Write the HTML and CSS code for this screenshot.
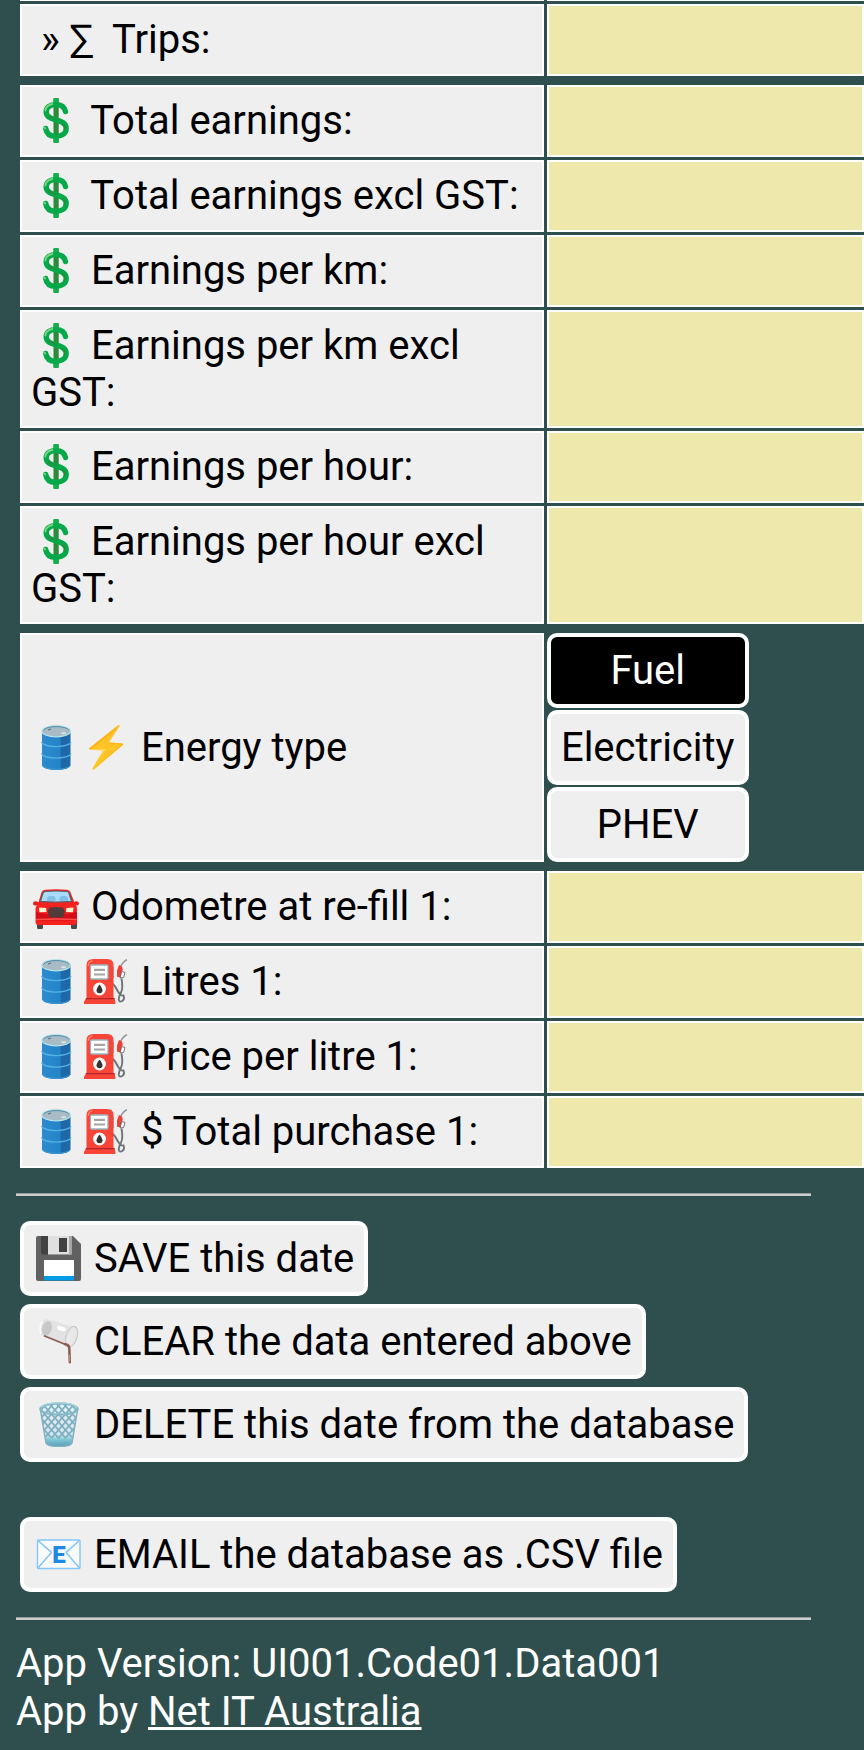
FILE: index.html
```html
<!DOCTYPE html>
<html lang="en">
<head>
  <meta charset="utf-8">
  <meta name="viewport" content="width=device-width, initial-scale=1">
  <title>Driver Log</title>
  <link rel="stylesheet" href="styles.css">
</head>
<body>
  <!-- icons -->
  <svg class="defs" aria-hidden="true">
    <defs>
      <linearGradient id="barrelSide" x1="0" x2="1">
        <stop offset="0" stop-color="#2b8bce"/>
        <stop offset=".64" stop-color="#2484c8"/>
        <stop offset=".67" stop-color="#1d69aa"/>
        <stop offset="1" stop-color="#2167a5"/>
      </linearGradient>
      <linearGradient id="basketFill" x1="0" x2="0" y1="0" y2="1">
        <stop offset="0" stop-color="#b9dce8" stop-opacity=".2"/>
        <stop offset=".68" stop-color="#a8d6e3" stop-opacity=".4"/>
        <stop offset=".8" stop-color="#82c8d8"/>
        <stop offset="1" stop-color="#5a9cb2"/>
      </linearGradient>
      <pattern id="mesh" width="7" height="8" patternUnits="userSpaceOnUse">
        <path d="M0 0l7 8M7 0L0 8" stroke="#7badc0" stroke-width="1.700"/>
      </pattern>
    </defs>
    <symbol id="dollar" viewBox="0 0 50 45">
      <rect x="22.500" y="0" width="5.200" height="45" rx="1.200" fill="#2c8a3b"/>
      <path d="M22.500 1.200q0-1.200 1.200-1.200h2.800q1.200 0 1.200 1.200V7h-5.200zM22.500 39h5.200v4.800q0 1.200-1.200 1.200h-2.800q-1.200 0-1.200-1.200z" fill="#12b04a"/>
      <path d="M34.500 13.500C33.500 8.500 30 6.600 25 6.600c-6 0-9.800 2.700-9.800 7.300 0 5 4.600 6.500 9.800 7.900 5.500 1.500 10.200 3.200 10.200 8.500 0 5-4.200 8-10.200 8-5.800 0-9.500-2.500-10.300-7.800" fill="none" stroke="#06a94a" stroke-width="5.400" stroke-linecap="round"/>
      <path d="M31 25.500c3 1.500 3.500 4 2.500 7M17 17.500c2 2.500 6 3.200 9 4" fill="none" stroke="#2c8a3b" stroke-width="1.400"/>
      <path d="M14.300 12.500c.5-3.500 3-5.800 7-6.500M13 29.500c.6 0 1 .5 1.100 1.200" fill="none" stroke="#7ad681" stroke-width="1.800" stroke-linecap="round"/>
    </symbol>
    <symbol id="barrel" viewBox="0 0 50 45">
      <path d="M11 6v34c0 3 7 5 14.300 5s14.200-2 14.200-5V6z" fill="url(#barrelSide)"/>
      <path d="M10.500 17c1 3 8 4.600 14.700 4.600S39 20 40 17M10.500 28.500c1 3 8 4.600 14.700 4.600S39 31.500 40 28.500" fill="none" stroke="#55b0e2" stroke-width="1.300"/>
      <path d="M11 40c1 2.500 7 4.300 14.300 4.300S38.500 42.500 39.500 40" fill="none" stroke="#3e9cd4" stroke-width="1"/>
      <ellipse cx="25.200" cy="6.200" rx="14.300" ry="5.600" fill="#a9bcc5" stroke="#b4e3e9" stroke-width="1.200"/>
      <path d="M12.500 5.500C14 2.800 19 1.600 25.200 1.600S37 3 38 5.500" fill="none" stroke="#4d87ad" stroke-width="1"/>
      <ellipse cx="32.500" cy="8.300" rx="2.500" ry="1" fill="#dce5e9"/>
      <path d="M17 4.800l3-.7" stroke="#577d99" stroke-width="1.300"/>
    </symbol>
    <symbol id="bolt" viewBox="0 0 50 45">
      <path d="M37.500 0L8 23.500q-.4 1 1 1.100l13 .9-10.600 18q0 1.700 1.200 1.400L42 19.800q.3-1-1-1.200l-13-1L38.600 1q.1-1.300-1.100-1z" fill="#ffc527"/>
      <path d="M37.500 0L8 23.500l1.800.9L34.500 5zM28 17.600l-2.500.2L31 19l9.500.6L18 39l-6.300 5.500L42 19.800q.3-1-1-1.200z" fill="#fdb316"/>
      <path d="M13 24.900l9 .6-9 15L24.500 24z" fill="#ffdc6b"/>
    </symbol>
    <symbol id="car" viewBox="0 0 50 45">
      <path d="M6 38h6v5.500q0 1.500-1.500 1.500h-3Q6 45 6 43.500zM40 38h6v5.500q0 1.500-1.500 1.500h-3Q40 45 40 43.500z" fill="#484848"/>
      <path d="M2 19.500q0-2.500 3-2.300l4 1.500v2.500l-5 .2Q2 21.500 2 19.500zM48 19.500q0-2.500-3-2.300l-4 1.500v2.500l5 .2q2-.1 2-1.900z" fill="#e5211f"/>
      <path d="M14 5.800q11-1 22 0 2.600.2 3.500 2.400L44 20q2 2 2 6v12q0 3-3 3H7.500q-3 0-3-3V26q0-4 2.500-6l3.500-11.800q1-2.200 3.500-2.400z" fill="#f5221f"/>
      <path d="M5 28q20 5 41 0v8.500H5z" fill="#d50d19"/>
      <path d="M5 35.500q20-1 41 0" stroke="#ff5148" stroke-width="1.600" fill="none"/>
      <path d="M14.500 7.500q10.500-1 21.500 0 1.500.2 2 1.500l2.500 8.300q-15.500 1.400-31 0L12 9q.7-1.300 2.500-1.500z" fill="#a9dcfa" stroke="#52656d" stroke-width="1.200"/>
      <path d="M16 17v-2q0-3 3-3h2.500q3 0 3 3v2zM28.500 17v-2q0-3 3-3H34q3 0 3 3v2z" fill="#82bfe7"/>
      <path d="M16.500 28l2-4.500q6.500-1 13.500 0l2 4.500-2.500 5.500H19z" fill="#523b3b"/>
      <path d="M8 23.500l7 .5.500 4-7 .2zM42.500 23.500l-7 .5-.5 4 7 .2z" fill="#fff9d3"/>
    </symbol>
    <symbol id="pump" viewBox="0 0 50 45">
      <path d="M31 24q3.500 3 6 8.500 3 5 5.500 4 1.500 3.500-1.200 5.500-3.300 1.700-3.600-1.500.2-3 2.300-7 2.300-4 .5-14" fill="none" stroke="#6d7477" stroke-width="1.900"/>
      <path d="M46 .8q-3 1-6.500 6.500" fill="none" stroke="#939393" stroke-width="1.500"/>
      <path d="M38 6l3 1.500.8 3.500-1.500 2v5.500l-4.300-.7V11.500z" fill="#ef3e36"/>
      <path d="M40.700 12.500l3.300 1-1.400 5-3.600.5z" fill="#fff" stroke="#555" stroke-width=".8"/>
      <path d="M31 8h2v11h-2z" fill="#99b2bd"/>
      <path d="M5.500 6q0-6 7-6H26q6.500 0 6.500 6v34h-27z" fill="#f94438"/>
      <path d="M7.300 7q0-4.500 4-5.200" stroke="#ff8a60" stroke-width="1.300" fill="none"/>
      <path d="M5 39h28.500l.9 4v2H3v-2z" fill="#f94438"/>
      <path d="M5 39h28.500v1.300H5z" fill="#b7252a"/>
      <rect x="9.500" y="6" width="17.500" height="14" rx="1" fill="#fff" stroke="#99b2bd" stroke-width="1.300"/>
      <path d="M13 10.800h11M13 15.500h11" stroke="#a4a4a4" stroke-width="2.200"/>
      <circle cx="18.500" cy="30" r="6.400" fill="#fff"/>
      <path d="M18.500 25.500q3 4 3 5.700a3 3 0 0 1-6 0q0-1.700 3-5.700z" fill="#333"/>
    </symbol>
    <symbol id="floppy" viewBox="0 0 50 45">
      <path d="M4 0h35l8 8v35q0 2-2 2H4q-2 0-2-2V2q0-2 2-2z" fill="#616161"/>
      <path d="M7 0h30v18.500H9q-2 0-2-2z" fill="#424242"/>
      <path d="M14 0h23.500v18.500H14z" fill="#e0e0e0"/>
      <path d="M35 0h2.500v18.500H35z" fill="#aaa"/>
      <path d="M25 2h8v14h-8z" fill="#424242"/>
      <path d="M10 24h30v16H10z" fill="#fff"/>
      <path d="M10 40h30v4.500H10z" fill="#039be5"/>
    </symbol>
    <symbol id="cup" viewBox="0 0 50 45">
      <path d="M13 .3l26 7.200q5.500 1 4.700 8.500-1.700 10-8.700 12L10 17.500q-5.500-2-4.500-9Q7.500-.3 13 .3z" fill="#e2e2e2"/>
      <ellipse cx="13" cy="9.500" rx="4.700" ry="7.500" transform="rotate(16 13 9.500)" fill="#c8c8c8"/>
      <path d="M8.500 2.500Q4.500 8 7 15" stroke="#fff" stroke-width="1.500" fill="none"/>
      <path d="M10 16.800l21 8.400" stroke="#8d5b50" stroke-width="1.700" fill="none"/>
      <ellipse cx="37.500" cy="17.800" rx="5.400" ry="10.700" transform="rotate(18 37.500 17.800)" fill="#e8e8e8" stroke="#cacaca" stroke-width="1.200"/>
      <path d="M25 8.800l5 1.500" stroke="#fff" stroke-width="4" stroke-linecap="round"/>
      <path d="M31 25.200q4 .5 4.300 4l.5 14" stroke="#8d5b50" stroke-width="2.500" stroke-linecap="round" fill="none"/>
      <path d="M35.500 36l.3 6.500" stroke="#c09a90" stroke-width="1" fill="none"/>
    </symbol>
    <symbol id="basket" viewBox="0 0 50 45">
      <path d="M6.500 8L12 41q1.500 3.500 13 3.500T38 41l5.500-33z" fill="url(#basketFill)"/>
      <path d="M6.500 8l4.300 27q14 3 28.400 0L43.500 8z" fill="url(#mesh)"/>
      <path d="M6.500 8L12 41q1.500 3.500 13 3.500T38 41l5.500-33" fill="none" stroke="#82b1c3" stroke-width="1.500"/>
      <ellipse cx="25" cy="7" rx="18.700" ry="5.700" fill="#e0f2f6"/>
      <ellipse cx="25" cy="7" rx="18.700" ry="5.700" fill="url(#mesh)" stroke="#84b7c8" stroke-width="2.200"/>
      <path d="M7 5.500Q10 .9 25 .9T43 5.500" fill="none" stroke="#a9d5df" stroke-width="1.300"/>
    </symbol>
  </svg>

  <form class="log">
    <div class="group">
      <div class="row-end"></div>
      <div class="row-end"></div>
      <label for="trips">&nbsp;» ∑&nbsp; Trips:</label>
      <input type="text" id="trips">
    </div>

    <div class="group">
      <label for="earn"><svg class="icon"><use href="#dollar"/></svg> Total earnings:</label>
      <input type="text" id="earn">
      <label for="earnEx"><svg class="icon"><use href="#dollar"/></svg> Total earnings excl GST:</label>
      <input type="text" id="earnEx">
      <label for="perKm"><svg class="icon"><use href="#dollar"/></svg> Earnings per km:</label>
      <input type="text" id="perKm">
      <label for="perKmEx"><svg class="icon"><use href="#dollar"/></svg> Earnings per km excl GST:</label>
      <input type="text" id="perKmEx">
      <label for="perHour"><svg class="icon"><use href="#dollar"/></svg> Earnings per hour:</label>
      <input type="text" id="perHour">
      <label for="perHourEx"><svg class="icon"><use href="#dollar"/></svg> Earnings per hour excl GST:</label>
      <input type="text" id="perHourEx">
    </div>

    <div class="group">
      <div class="caption" id="energyLabel"><span><svg class="icon"><use href="#barrel"/></svg><svg class="icon"><use href="#bolt"/></svg> Energy type</span></div>
      <div class="energy" role="group" aria-labelledby="energyLabel">
        <button type="button" class="selected" aria-pressed="true">Fuel</button>
        <button type="button" aria-pressed="false">Electricity</button>
        <button type="button" aria-pressed="false">PHEV</button>
      </div>
    </div>

    <div class="group">
      <label for="odo"><svg class="icon"><use href="#car"/></svg> Odometre at re-fill 1:</label>
      <input type="text" id="odo">
      <label for="litres"><svg class="icon"><use href="#barrel"/></svg><svg class="icon"><use href="#pump"/></svg> Litres 1:</label>
      <input type="text" id="litres">
      <label for="price"><svg class="icon"><use href="#barrel"/></svg><svg class="icon"><use href="#pump"/></svg> Price per litre 1:</label>
      <input type="text" id="price">
      <label for="total"><svg class="icon"><use href="#barrel"/></svg><svg class="icon"><use href="#pump"/></svg> $ Total purchase 1:</label>
      <input type="text" id="total">
    </div>
  </form>

  <div class="bottom">
    <hr>
    <div class="actions">
      <button type="button"><svg class="icon"><use href="#floppy"/></svg> SAVE this date</button>
      <button type="button"><svg class="icon"><use href="#cup"/></svg> CLEAR the data entered above</button>
      <button type="button"><svg class="icon"><use href="#basket"/></svg> DELETE this date from the database</button>
      <button type="button" class="email"><svg class="icon" viewBox="0 0 50 45">
        <rect x="3.500" y="8" width="42.500" height="28.500" rx="1" fill="#fafafa" stroke="#82c7f7" stroke-width="1.400"/>
        <path d="M4 8.500L16 19q2.500 1.500 0 3L4 36M45.500 8.500L33.500 19q-2.500 1.500 0 3l12 14" fill="none" stroke="#82c7f7" stroke-width="1.600"/>
        <text class="mail-letter" x="25" y="31" text-anchor="middle">E</text>
      </svg> EMAIL the database as .CSV file</button>
    </div>
    <hr>
    <div class="about">
      App Version: UI001.Code01.Data001<br>
      App by <a href="#">Net IT Australia</a>
    </div>
  </div>

  <script>
    const types = document.querySelectorAll(".energy button");
    types.forEach(function (btn) {
      btn.addEventListener("click", function () {
        types.forEach(function (b) {
          b.classList.toggle("selected", b === btn);
          b.setAttribute("aria-pressed", b === btn);
        });
      });
    });
  </script>
</body>
</html>
```
FILE: styles.css
```css
* {
  box-sizing: border-box;
}
body {
  margin: 0 0 0 16px;
  background-color: darkslategray;
  color: white;
  font-family: Roboto, sans-serif;
  font-size: 40px;
  line-height: 47px;
}
.defs {
  display: block;
  width: 0;
  height: 0;
}
.icon {
  width: 50px;
  height: 45px;
  vertical-align: -9px;
}
.mail-letter {
  font-size: 24px;
  font-weight: 900;
  fill: #1e88e5;
}

/* entry table */
.log {
  display: flex;
  flex-direction: column;
  gap: 9px;
  margin-left: 4px;
}
.group {
  display: grid;
  grid-template-columns: 38fr 23fr;
  gap: 3px;
}
.row-end {
  height: 1px;
  background-color: white;
}
label,
.caption {
  min-height: 72px;
  padding: 10px 9px;
  border: 2px solid white;
  background-color: #efefef;
  color: black;
}
.caption {
  display: flex;
  align-items: center;
}
input {
  width: 100%;
  min-width: 0;
  padding: 10px;
  border: 2px solid white;
  border-radius: 0;
  background-color: palegoldenrod;
  font: inherit;
}

/* buttons */
button {
  height: 75px;
  padding: 0 10px;
  border: 4px solid white;
  border-radius: 10px;
  background-color: #efefef;
  color: black;
  font: inherit;
  cursor: pointer;
}
button.selected {
  background-color: black;
  color: white;
}
.energy {
  display: flex;
  flex-direction: column;
  gap: 2px;
  justify-self: start;
}
.bottom {
  margin-right: 53px;
}
hr {
  height: 3px;
  margin: 25px 0 20px;
  border: none;
  border-top: 1px solid #9a9a9a;
  background-color: #ccc;
}
.actions {
  display: flex;
  flex-direction: column;
  align-items: flex-start;
  gap: 8px;
  margin: 25px 0 25px 4px;
}
.actions .email {
  margin-top: 47px;
}
.about {
  line-height: 48px;
}
.about a {
  color: white;
  text-decoration-thickness: 3px;
}
```
